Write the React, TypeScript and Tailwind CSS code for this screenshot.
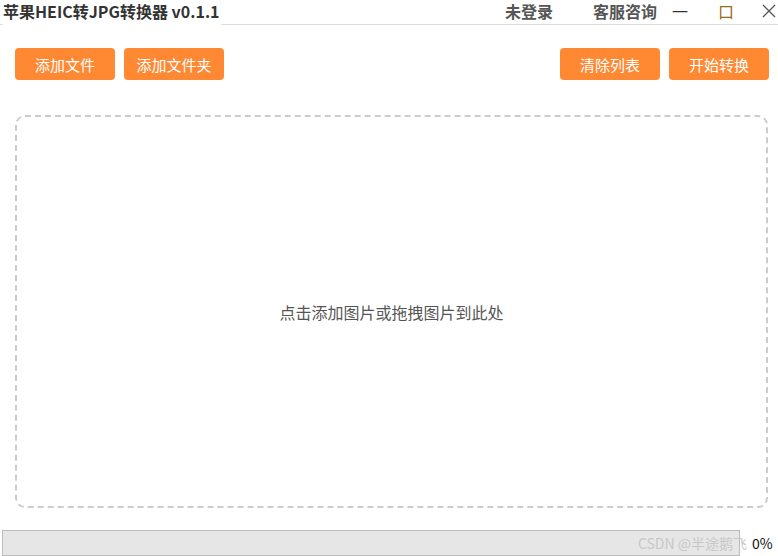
import React from "react";

const font = { fontFamily: '"Noto Sans CJK SC", "Noto Sans", sans-serif' };

function Btn({ children }: { children: React.ReactNode }) {
  return (
    <button className="w-[100px] h-[32px] rounded-[4px] bg-[#ff8833] text-white text-[15px] leading-none flex items-center justify-center">
      {children}
    </button>
  );
}

export default function App() {
  return (
    <div className="w-[778px] h-[556px] bg-white relative overflow-hidden" style={font}>
      {/* Title bar */}
      <div className="flex items-stretch h-[25px]">
        <div className="w-[3px] border-b border-[#dddddd]" />
        <div className="w-[218px] text-[16px] font-bold text-[#333333] leading-[22px] whitespace-nowrap">
          苹果HEIC转JPG转换器 v0.1.1
        </div>
        <div className="flex-1 border-b border-[#dddddd] flex items-start">
          <div className="ml-[284px] w-[48px] flex-none text-[16px] font-bold text-[#555555] leading-[22px] whitespace-nowrap">未登录</div>
          <div className="ml-[40px] w-[64px] flex-none text-[16px] font-bold text-[#555555] leading-[22px] whitespace-nowrap">客服咨询</div>
          <div className="ml-[13px] w-[20px] flex-none text-center text-[16px] text-[#333333] leading-[22px]">一</div>
          <div className="ml-[26px] w-[20px] flex-none text-center text-[16px] text-[#9a6a20] leading-[22px]">口</div>
          <div className="ml-[25px] w-[16px] h-[22px] flex-none flex items-center justify-center">
            <svg width="14" height="14" viewBox="0 0 14 14">
              <path d="M1 1 L13 13 M13 1 L1 13" stroke="#555555" strokeWidth="1.3" fill="none" />
            </svg>
          </div>
        </div>
      </div>

      {/* Buttons */}
      <div className="flex items-center pl-[15px] pr-[9px] mt-[23px]">
        <Btn>添加文件</Btn>
        <div className="ml-[9px]">
          <Btn>添加文件夹</Btn>
        </div>
        <div className="flex-1" />
        <Btn>清除列表</Btn>
        <div className="ml-[9px]">
          <Btn>开始转换</Btn>
        </div>
      </div>

      {/* Drop zone */}
      <div className="mx-[15px] mt-[35px] w-[753px] h-[393px] border-2 border-dashed border-[#cccccc] rounded-[10px] flex items-center justify-center">
        <span className="text-[16px] text-[#555555]">点击添加图片或拖拽图片到此处</span>
      </div>

      {/* Progress */}
      <div className="flex items-center mt-[22px] pl-[2px]">
        <div className="w-[738px] h-[26px] bg-[#e6e6e6] border border-[#bcbcbc] relative">
          <span className="absolute right-[-8px] top-[2px] text-[14px] text-[#c8c8c8] whitespace-nowrap">
            CSDN @半途鹅飞
          </span>
        </div>
        <div className="ml-[12px] text-[14px] text-[#111111] leading-none relative">0%</div>
      </div>
    </div>
  );
}
